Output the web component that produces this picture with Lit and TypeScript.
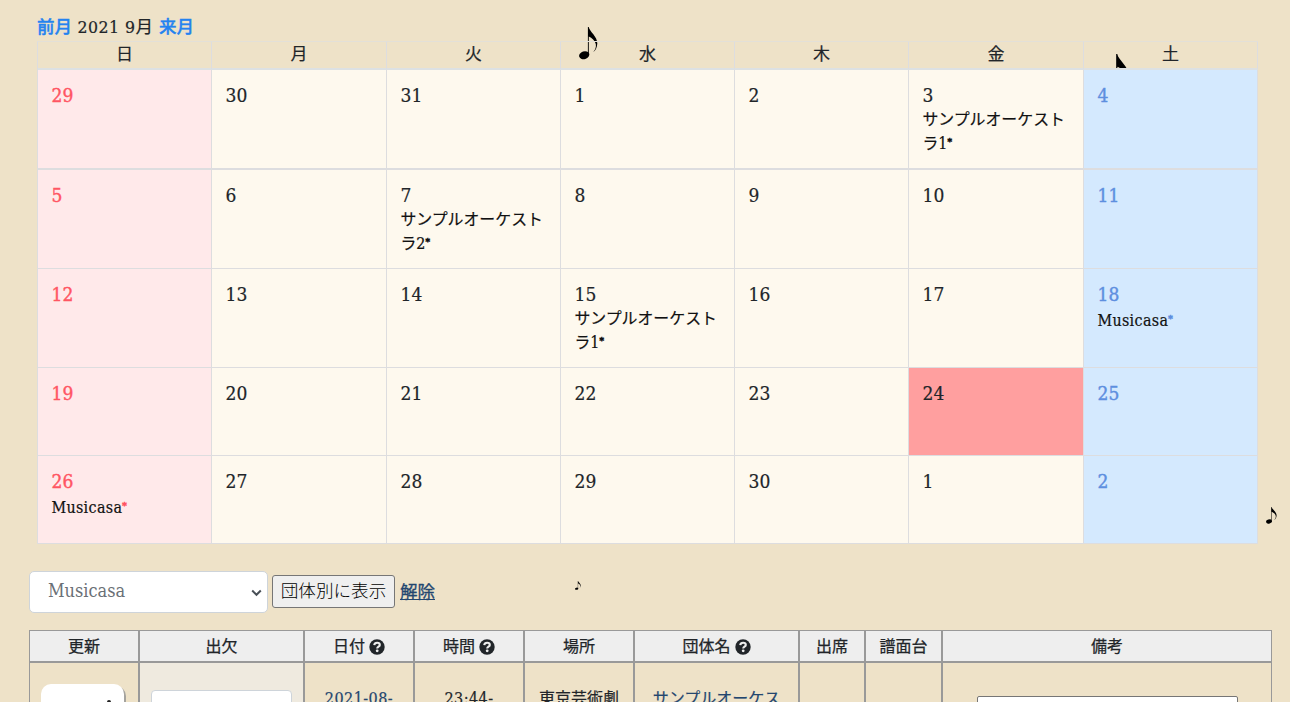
import { LitElement, html, css } from "lit";
import { customElement } from "lit/decorators.js";

interface Day {
  n: number;
  event?: string;
  today?: boolean;
}

const DAY_NAMES = ["日", "月", "火", "水", "木", "金", "土"];

const WEEKS: Day[][] = [
  [{ n: 29 }, { n: 30 }, { n: 31 }, { n: 1 }, { n: 2 }, { n: 3, event: "サンプルオーケストラ1" }, { n: 4 }],
  [{ n: 5 }, { n: 6 }, { n: 7, event: "サンプルオーケストラ2" }, { n: 8 }, { n: 9 }, { n: 10 }, { n: 11 }],
  [{ n: 12 }, { n: 13 }, { n: 14 }, { n: 15, event: "サンプルオーケストラ1" }, { n: 16 }, { n: 17 }, { n: 18, event: "Musicasa" }],
  [{ n: 19 }, { n: 20 }, { n: 21 }, { n: 22 }, { n: 23 }, { n: 24, today: true }, { n: 25 }],
  [{ n: 26, event: "Musicasa" }, { n: 27 }, { n: 28 }, { n: 29 }, { n: 30 }, { n: 1 }, { n: 2 }],
];

const COLUMNS = [
  { label: "更新" },
  { label: "出欠" },
  { label: "日付", help: true },
  { label: "時間", help: true },
  { label: "場所" },
  { label: "団体名", help: true },
  { label: "出席" },
  { label: "譜面台" },
  { label: "備考" },
];

@customElement("music-note")
export class MusicNote extends LitElement {
  static styles = css`
    :host { display: block; }
    svg { display: block; width: 100%; height: 100%; }
  `;
  render() {
    return html`<svg viewBox="0 0 19 33" preserveAspectRatio="none">
      <ellipse cx="5.2" cy="28.2" rx="5.2" ry="3.9" transform="rotate(-18 5.2 28.2)" fill="#000"></ellipse>
      <path d="M8.9 0H9.7C10.6 4.6 18.4 9.5 18.3 16.5C18.1 20.5 16.6 23.6 14.2 25C16.4 22.6 17.3 20 16.8 17C15.8 13.4 13 10.8 9.8 9.4V28H8.9Z" fill="#000"></path>
    </svg>`;
  }
}

@customElement("month-calendar")
export class MonthCalendar extends LitElement {
  static styles = css`
    :host { display: block; }
    .grid {
      display: grid;
      grid-template-columns: 174px 175px 174px 174px 174px 175px 174px;
      grid-template-rows: 28px 100px 99px 99px 88px 88px;
      border-left: 1px solid #dddddf;
      border-top: 1px solid #e3e0d8;
      width: 1220px;
    }
    .name {
      border-right: 1px solid #dddddf;
      border-bottom: 2px solid #dde1e3;
      text-align: center;
      font-size: 17px;
      line-height: 24px;
      -webkit-text-stroke: 0.2px currentColor;
    }
    .day {
      border-right: 1px solid #dddddf;
      border-bottom: 1px solid #dddddf;
      background: #fef9ee;
      padding: 10px 12px 0 13.4px;
      overflow: hidden;
      -webkit-text-stroke: 0.2px currentColor;
    }
    .first { border-bottom-width: 2px; }
    .num { font-size: 19px; line-height: 30px; height: 28px; letter-spacing: 0.15px; }
    .event { color: #111; font-size: 15.9px; line-height: 24px; word-break: break-all; }
    .latin { letter-spacing: 0.35px; line-height: 27px; }
    .star { font-size: 10px; line-height: 12px; vertical-align: 4px; letter-spacing: 0; -webkit-text-stroke: 0.6px currentColor; }
    .sun { background: #ffe9ea; color: #ff5563; -webkit-text-stroke: 0.4px currentColor; }
    .sat { background: #d4e9fe; color: #5e8fdf; -webkit-text-stroke: 0.4px currentColor; }
    .sun .event, .sat .event { -webkit-text-stroke: 0.2px currentColor; }
    .today { background: #ff9f9f; }
    .sun .star { color: #ff5563; -webkit-text-stroke: 0.6px currentColor; }
    .sat .star { color: #5e8fdf; -webkit-text-stroke: 0.6px currentColor; }
  `;
  render() {
    return html`<div class="grid">
      ${DAY_NAMES.map((d) => html`<div class="name">${d}</div>`)}
      ${WEEKS.map((week, w) =>
        week.map((d, i) => html`<div
          class="day ${w === 0 ? "first" : ""} ${i === 0 ? "sun" : i === 6 ? "sat" : ""} ${d.today ? "today" : ""}"
        ><div class="num">${d.n}</div>${d.event
          ? html`<div class="event ${d.event === "Musicasa" ? "latin" : ""}">${d.event}<span class="star">*</span></div>`
          : ""}</div>`)
      )}
    </div>`;
  }
}

@customElement("attendance-table")
export class AttendanceTable extends LitElement {
  static styles = css`
    :host { display: block; }
    .table {
      display: grid;
      grid-template-columns: 110px 165px 110px 110px 110px 165px 66px 77px 330px;
      grid-template-rows: 32px 110px;
      width: 1243px;
      -webkit-text-stroke: 0.2px currentColor;
    }
    .head, .cell { border: 1px solid #999; box-sizing: border-box; }
    .head {
      background: #eee;
      display: flex;
      align-items: center;
      justify-content: center;
      gap: 4px;
      font-size: 16px;
      line-height: 24px;
      padding-top: 1px;
      -webkit-text-stroke: 0.25px currentColor;
    }
    .help { width: 16px; height: 16px; display: block; }
    .cell { text-align: center; font-size: 16px; line-height: 24px; padding: 24px 10px 0; overflow: hidden; }
    .digits { letter-spacing: 0.45px; }
    .link { color: #23466f; }
    .tint { background: #efeadf; padding: 27px 11px 0; }
    .control { height: 40px; background: #fff; border: 1px solid #ced4da; border-radius: 4px; box-sizing: border-box; }
    .update { padding: 21px 14px 0 11px; }
    .button { height: 60px; background: #fff; border-radius: 10px; box-shadow: 2px 2px 0 #a5a39e; display: flex; justify-content: flex-end; }
    .dot { width: 4px; height: 4px; border-radius: 2px; background: #222; margin: 16px 13px 0 0; }
    .memo { padding: 33px 33px 0 34px; }
    .input { height: 30px; background: #fff; border: 1px solid #767676; border-radius: 2px; box-sizing: border-box; }
  `;
  private help() {
    return html`<svg class="help" viewBox="0 0 16 16">
      <circle cx="8" cy="8" r="7.7" fill="#212529"></circle>
      <path d="M5.2 6.2C5.5 4.4 6.6 3.8 8.1 3.8C9.6 3.8 10.8 4.6 10.8 5.9C10.8 7.7 8.2 7.5 8.2 9.4" fill="none" stroke="#eee" stroke-width="2.1"></path>
      <circle cx="8.2" cy="11.8" r="1.4" fill="#eee"></circle>
    </svg>`;
  }
  render() {
    return html`<div class="table">
      ${COLUMNS.map((c) => html`<div class="head"><span>${c.label}</span>${c.help ? this.help() : ""}</div>`)}
      <div class="cell update"><div class="button"><span class="dot"></span></div></div>
      <div class="cell tint"><div class="control"></div></div>
      <div class="cell link digits">2021-08-</div>
      <div class="cell digits">23:44-</div>
      <div class="cell">東京芸術劇</div>
      <div class="cell link">サンプルオーケス</div>
      <div class="cell"></div>
      <div class="cell"></div>
      <div class="cell memo"><div class="input"></div></div>
    </div>`;
  }
}

@customElement("app-root")
export class AppRoot extends LitElement {
  static styles = css`
    :host {
      display: block;
      position: relative;
      height: 702px;
      overflow: hidden;
      background: #eee2c8;
      color: #212529;
      font-family: "DejaVu Serif Condensed", "DejaVu Serif", "Noto Sans CJK JP", serif;
      font-stretch: condensed;
    }
    .page { position: relative; z-index: 1; display: flex; flex-direction: column; }
    .month { padding: 14px 0 0 37px; height: 27px; font-size: 17.5px; line-height: 26px; white-space: pre; letter-spacing: 0.5px; -webkit-text-stroke: 0.2px currentColor; }
    .nav { color: #2483f0; font-weight: 500; letter-spacing: 0; -webkit-text-stroke: 0.35px #2483f0; }
    .calendar { margin-left: 37px; }
    .filter { display: flex; align-items: center; margin: 27px 0 0 29px; height: 42px; }
    .select {
      box-sizing: border-box;
      width: 239px;
      height: 42px;
      background: #fff;
      border: 1px solid #ced4da;
      border-radius: 5px;
      display: flex;
      align-items: center;
      justify-content: space-between;
      padding: 0 5px 3px 18px;
      color: #6a7076;
      font-size: 18px;
      font-weight: 300;
    }
    .chevron { width: 11px; height: 8px; margin-top: 4px; }
    .show {
      box-sizing: border-box;
      width: 123px;
      height: 33px;
      margin: 0 5px 2px 4px;
      background: #efefef;
      border: 1px solid #767676;
      border-radius: 3px;
      text-align: center;
      font-family: "DejaVu Serif Condensed", "Noto Sans CJK JP Light", "Noto Sans CJK JP", serif;
      font-size: 17.6px;
      line-height: 30px;
      color: #000;
      font-weight: 300;
    }
    .clear { color: #23466f; font-size: 17.5px; line-height: 26px; text-decoration: underline; -webkit-text-stroke: 0.3px #23466f; }
    .table { margin: 17px 0 0 29px; }
    .note { position: absolute; z-index: 0; }
    .n1 { left: 579px; top: 27px; width: 19px; height: 33px; }
    .n2 { left: 1104px; top: 54px; width: 26px; height: 45px; }
    .n3 { left: 1266px; top: 507px; width: 11px; height: 17px; }
    .n4 { left: 575px; top: 581px; width: 6px; height: 9px; }
  `;
  render() {
    return html`
      <music-note class="note n1"></music-note>
      <music-note class="note n2"></music-note>
      <music-note class="note n3"></music-note>
      <music-note class="note n4"></music-note>
      <div class="page">
        <div class="month"><span class="nav">前月</span> 2021 9月 <span class="nav">来月</span></div>
        <month-calendar class="calendar"></month-calendar>
        <div class="filter">
          <div class="select"><span>Musicasa</span>
            <svg class="chevron" viewBox="0 0 11 8"><path d="M1.2 1.5L5.5 5.8L9.8 1.5" fill="none" stroke="#495057" stroke-width="2"></path></svg>
          </div>
          <div class="show">団体別に表示</div>
          <span class="clear">解除</span>
        </div>
        <attendance-table class="table"></attendance-table>
      </div>`;
  }
}
